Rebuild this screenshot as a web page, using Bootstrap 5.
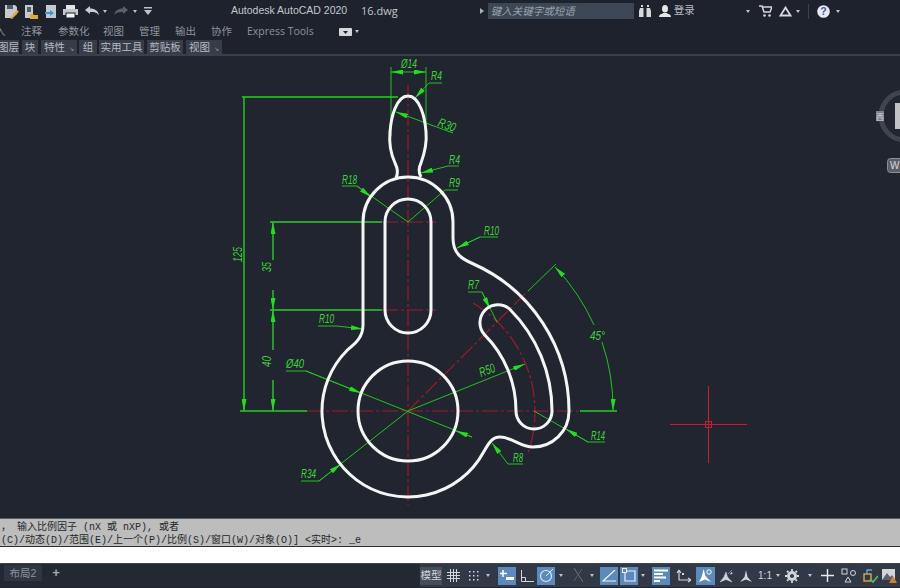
<!DOCTYPE html>
<html lang="zh-CN">
<head>
  <meta charset="UTF-8">
  <title>Autodesk AutoCAD 2020 16.dwg</title>
  <link href="https://cdn.jsdelivr.net/npm/bootstrap@5.3.3/dist/css/bootstrap.min.css" rel="stylesheet">
  <style>
    html, body { height: 100%; overflow: hidden; }
    body {
      background: #202530;
      color: #c6cbd2;
      font-family: "Liberation Sans", "Noto Sans CJK SC", sans-serif;
      font-size: 11px;
    }
    .cad-head { height: 56px; background: #1d222c; border-bottom: 2px solid #3a404b; flex: none; }
    .quick-row { height: 22px; flex: none; }
    .quick-row svg { display: block; flex: none; }
    .title-text { font-size: 10.5px; color: #c3c7cc; width: 116px; white-space: nowrap; }
    .file-text { font-family: "Open Sans", sans-serif; font-size: 11px; color: #c3c7cc; }
    .search-box { width: 146px; height: 16px; background: #3c4654; color: #9aa2ad; font-style: italic; font-size: 10.5px; line-height: 16px; padding-left: 3px; }
    .cad-caret { width: 0; height: 0; border-left: 2.5px solid transparent; border-right: 2.5px solid transparent; border-top: 3px solid #c0c4ca; flex: none; }
    .tab-row { height: 18px; flex: none; padding-top: 1px; color: #8d939c; font-size: 10.5px; }
    .tab-item { white-space: nowrap; }
    .panel-row { height: 14px; color: #b5bac1; font-size: 10.5px; line-height: 14px; }
    .panel-chip { background: #363c48; height: 14px; white-space: nowrap; text-align: center; flex: none; }
    .chip-arrow { font-family: "DejaVu Sans", sans-serif; font-size: 6px; color: #a0a5ad; margin-left: 4px; }
    .cad-view { height: 462px; flex: none; display: block; background: #202530; }
    .dim-text { font-family: "Liberation Sans", sans-serif; font-style: italic; font-size: 13px; fill: #3fd438; }
    .cmd-out { height: 29px; background: #bdbdbd; border-top: 1px solid #5a5f66; border-bottom: 1px solid #30343a; flex: none; color: #24272b;
      font-family: "Liberation Mono", "Noto Sans CJK SC", monospace; font-size: 10px; white-space: pre; overflow: hidden; padding: 2px 0 0 1px; }
    .cmd-line { height: 13px; line-height: 13px; overflow: hidden; }
    .cmd-in { height: 16px; background: #fff; flex: none; }
    .status-row { height: 24px; background: #232933; border-top: 1px solid #414752; flex: none; }
    .layout-tab { width: 38px; height: 16px; background: #2f3541; color: #8e949d; font-size: 10.5px; line-height: 16px; text-align: center; margin-top: 1px; }
    .add-tab { width: 20px; color: #a3a8b0; font-size: 13px; line-height: 15px; text-align: center; font-weight: bold; margin-top: 1px; }
    .status-tools { height: 23px; background: #323946; }
    .tool-btn { height: 18px; width: 18px; flex: none; display: flex; align-items: center; justify-content: center; color: #d2d5da; }
    .tool-btn.is-on { background: #5b8bbd; }
    .tool-label { width: 22px; background: #474e5b; font-size: 10.5px; }
    .tool-caret { width: 10px; flex: none; display: flex; align-items: center; justify-content: center; }
    .tool-gap { width: 3px; flex: none; }
  </style>
</head>
<body class="d-flex flex-column">

  <!-- 标题栏 + 功能区 -->
  <header class="cad-head d-flex flex-column">
    <div class="quick-row d-flex align-items-center">
      <svg class="ms-1" width="15" height="15" viewBox="0 0 15 15"><path d="M1 1h10l2 2v7l-5 4H1z" fill="#c5c8cc"/><rect x="3" y="1" width="6" height="4" fill="#555b66"/><path d="M6 14l7-8 2 1.500-7 7.500z" fill="#e0a83c"/></svg>
      <svg style="margin-left:5px" width="14" height="15" viewBox="0 0 14 15"><rect x="1" y="1" width="8" height="13" fill="#c5c8cc"/><rect x="3" y="3" width="4" height="5" fill="#555b66"/><path d="M6 10h3l1 1h4v4H6z" fill="#e0a83c"/></svg>
      <svg style="margin-left:7px" width="12" height="15" viewBox="0 0 12 15"><rect x="1" y="1" width="10" height="13" fill="#c5c8cc"/><path d="M0 8h5V6l4 3-4 3v-2H0z" fill="#2a9fd0"/></svg>
      <svg style="margin-left:6px" width="15" height="15" viewBox="0 0 15 15"><rect x="3" y="1" width="9" height="4" fill="#e4e6e8"/><rect x="0" y="5" width="15" height="6" fill="#c5c8cc"/><rect x="3" y="9" width="9" height="5" fill="#f2f3f4" stroke="#1d222c"/></svg>
      <svg style="margin-left:7px" width="14" height="10" viewBox="0 0 14 10"><path d="M0 4l5-4v2.500c5 0 8 2 9 7-2-3-4-3.500-9-3.500V8z" fill="#c9ccd0"/></svg>
      <div class="cad-caret ms-1"></div>
      <svg style="margin-left:7px" width="14" height="10" viewBox="0 0 14 10"><path d="M14 4L9 0v2.500c-5 0-8 2-9 7 2-3 4-3.500 9-3.500V8z" fill="#5a606a"/></svg>
      <div class="cad-caret" style="margin-left:5px"></div>
      <svg style="margin-left:7px" width="8" height="8" viewBox="0 0 8 8"><rect y="0" width="8" height="1.500" fill="#c0c4ca"/><path d="M0 3h8L4 8z" fill="#c0c4ca"/></svg>

      <div class="title-text" style="margin-left:79px">Autodesk AutoCAD 2020</div>
      <div class="file-text" style="margin-left:14px">16.dwg</div>

      <svg style="margin-left:82px" width="4" height="6" viewBox="0 0 4 6"><path d="M0 0l4 3-4 3z" fill="#aab0b8"/></svg>
      <div class="search-box" style="margin-left:4px">键入关键字或短语</div>
      <svg style="margin-left:5px" width="12" height="12" viewBox="0 0 12 12"><path d="M1 3h3.500v9H0V6zM7.500 3H11l1 3v6H7.500zM2 0h2v2H2zM8 0h2v2H8z" fill="#d6d8dc"/></svg>
      <svg style="margin-left:8px" width="12" height="12" viewBox="0 0 12 12"><ellipse cx="6" cy="3.800" rx="3" ry="3.800" fill="#e4e6e8"/><path d="M0 12c0-3 3-3 4.500-4h3c1.500 1 4.500 1 4.500 4z" fill="#e4e6e8"/></svg>
      <div style="margin-left:3px;font-size:10.5px;color:#b8bcc3">登录</div>
      <div class="cad-caret" style="margin-left:51px"></div>
      <svg style="margin-left:9px" width="13" height="12" viewBox="0 0 13 12"><path d="M0 1h3l2 6h6l2-5H4" fill="none" stroke="#d6d8dc" stroke-width="1.500"/><circle cx="5.500" cy="10.500" r="1.300" fill="#d6d8dc"/><circle cx="10.500" cy="10.500" r="1.300" fill="#d6d8dc"/></svg>
      <svg style="margin-left:7px" width="13" height="11" viewBox="0 0 13 11"><path d="M6.500 1.500L11.500 9.500H1.500z" fill="none" stroke="#d6d8dc" stroke-width="1.800"/></svg>
      <div class="cad-caret" style="margin-left:4px"></div>
      <div style="width:1px;height:15px;background:#3d434e;margin-left:8px"></div>
      <svg style="margin-left:8px" width="13" height="13" viewBox="0 0 13 13"><circle cx="6.500" cy="6.500" r="6.300" fill="#e8eaee"/><text x="6.500" y="10.300" text-anchor="middle" font-family="Liberation Sans" font-weight="700" font-size="10.500" fill="#3c55b0">?</text></svg>
      <div class="cad-caret" style="margin-left:6px"></div>
    </div>

    <div class="tab-row d-flex align-items-center">
      <div class="tab-item" style="width:21px;overflow:hidden;text-indent:-5px">入</div>
      <div class="tab-item" style="width:37px">注释</div>
      <div class="tab-item" style="width:45px">参数化</div>
      <div class="tab-item" style="width:36px">视图</div>
      <div class="tab-item" style="width:36px">管理</div>
      <div class="tab-item" style="width:36px">输出</div>
      <div class="tab-item" style="width:36px">协作</div>
      <div class="tab-item" style="width:92px;font-family:'Open Sans',sans-serif">Express Tools</div>
      <svg width="13" height="8" viewBox="0 0 13 8"><rect width="13" height="8" rx="1" fill="#d6d8dc"/><path d="M4 3h5L6.500 6z" fill="#1d222c"/></svg>
      <div class="cad-caret" style="margin-left:3px"></div>
    </div>

    <div class="panel-row d-flex">
      <div class="panel-chip" style="width:19px;direction:rtl">图层</div>
      <div class="panel-chip" style="width:16px;margin-left:3px">块</div>
      <div class="panel-chip" style="width:36px;margin-left:3px">特性<span class="chip-arrow">↘</span></div>
      <div class="panel-chip" style="width:18px;margin-left:2px">组</div>
      <div class="panel-chip" style="width:45px;margin-left:2px">实用工具</div>
      <div class="panel-chip" style="width:36px;margin-left:3px">剪贴板</div>
      <div class="panel-chip" style="width:36px;margin-left:3px">视图<span class="chip-arrow">↘</span></div>
    </div>
  </header>

  <!-- 模型空间，viewBox 与页面坐标一致 -->
  <svg class="cad-view" width="900" height="462" viewBox="0 56 900 462">
    <defs>
      <marker id="arrow" viewBox="0 0 12 5" refX="12" refY="2.500" markerWidth="12" markerHeight="5" markerUnits="userSpaceOnUse" orient="auto-start-reverse">
        <path d="M0 0L12 2.500 0 5z" fill="#1fe01a"/>
      </marker>
    </defs>

    <!-- 中心线 -->
    <g fill="none" stroke="#a3182b" stroke-width="1.200" stroke-dasharray="16 3 3 3">
      <path d="M408 85V505"/>
      <path d="M307 411H580"/>
      <path d="M382 222H436"/>
      <path d="M382 310H436"/>
      <path d="M408 411L528 291"/>
      <path d="M473 303A126 126 0 0 1 528 453"/>
    </g>

    <!-- 尺寸线 -->
    <g fill="none" stroke="#22c41f" stroke-width="1">
      <path d="M391 67V136M426 67V136"/>
      <path d="M408 72H391" marker-end="url(#arrow)"/>
      <path d="M408 72H426" marker-end="url(#arrow)"/>
      <path d="M442 83H429L415 98" marker-end="url(#arrow)"/>
      <path d="M453 133L396 112" marker-end="url(#arrow)"/>
      <path d="M459 166H448L421 173" marker-end="url(#arrow)"/>
      <path d="M342 186H357L408 222M408 222L445 190H458"/>
      <path d="M357 186L371 197" marker-end="url(#arrow)"/>
      <path d="M457 248L480 237H498"/>
      <path d="M480 237L457 248" marker-end="url(#arrow)"/>
      <path d="M318 326H337L363 329" marker-end="url(#arrow)"/>
      <path d="M286 371H306L472 437"/>
      <path d="M306 371L361 393" marker-end="url(#arrow)"/>
      <path d="M472 437L456 431" marker-end="url(#arrow)"/>
      <path d="M301 481H319L408 411"/>
      <path d="M319 481L341 464" marker-end="url(#arrow)"/>
      <path d="M408 411L525 364" marker-end="url(#arrow)"/>
      <path d="M468 292H482L497 322"/>
      <path d="M482 292L490 309" marker-end="url(#arrow)"/>
      <path d="M523 464H508L492 443" marker-end="url(#arrow)"/>
      <path d="M534 411L588 442H605"/>
      <path d="M588 442L566 429" marker-end="url(#arrow)"/>
      <path d="M528 291L556 264"/>
      <path d="M594 325A205 205 0 0 0 555 267" marker-end="url(#arrow)"/>
      <path d="M602 342A205 205 0 0 1 613 411" marker-end="url(#arrow)"/>
    </g>
    <g fill="none" stroke="#26d022" stroke-width="1.400">
      <path d="M242 97H398"/>
      <path d="M270 222H382"/>
      <path d="M270 310H382"/>
      <path d="M240 411H307"/>
      <path d="M580 411H617"/>
      <path d="M244 97V411" marker-end="url(#arrow)"/>
      <path d="M273 260V222" marker-end="url(#arrow)"/>
      <path d="M273 290V310" marker-end="url(#arrow)"/>
      <path d="M273 350V310" marker-end="url(#arrow)"/>
      <path d="M273 380V411" marker-end="url(#arrow)"/>
    </g>

    <!-- 轮廓 -->
    <g fill="none" stroke="#f4f5f5" stroke-width="3">
      <circle cx="408" cy="411" r="50"/>
      <path d="M385 222A23 23 0 0 1 431 222V310A23 23 0 0 1 385 310Z"/>
      <path d="M509.800 309.200A144 144 0 0 1 552 411A18 18 0 0 1 516 411A108 108 0 0 0 484.400 334.600A18 18 0 0 1 509.800 309.200Z"/>
      <path d="M363 222A45 45 0 0 1 453 222V238C453 254 462 259 473.500 264A161 161 0 0 1 569 411C569 432 552 447 533 447C520 447 512 437 500 437C491 437 488 445 483.460 452.250A86 86 0 1 1 347.190 350.190C356 343 363 337 363 325Z"/>
      <path d="M396 178C399 172 397 167 395 163C390 152 389 142 390 132C391 118 396 96 408 96C420 96 425 118 426 132C427 142 425 152 421 163C419 167 418 172 421 177"/>
    </g>

    <!-- 标注文字 -->
    <g class="dim-text">
      <text x="401" y="68" textLength="16" lengthAdjust="spacingAndGlyphs">Ø14</text>
      <text x="431" y="80" textLength="11" lengthAdjust="spacingAndGlyphs">R4</text>
      <text x="437" y="126" textLength="18" lengthAdjust="spacingAndGlyphs" transform="rotate(20 437 126)">R30</text>
      <text x="449" y="164" textLength="11" lengthAdjust="spacingAndGlyphs">R4</text>
      <text x="342" y="184" textLength="15" lengthAdjust="spacingAndGlyphs">R18</text>
      <text x="449" y="187" textLength="11" lengthAdjust="spacingAndGlyphs">R9</text>
      <text x="484" y="235" textLength="15" lengthAdjust="spacingAndGlyphs">R10</text>
      <text x="319" y="323" textLength="15" lengthAdjust="spacingAndGlyphs">R10</text>
      <text x="286" y="368" textLength="18" lengthAdjust="spacingAndGlyphs">Ø40</text>
      <text x="301" y="478" textLength="15" lengthAdjust="spacingAndGlyphs">R34</text>
      <text x="481" y="377" textLength="16" lengthAdjust="spacingAndGlyphs" transform="rotate(-20 481 377)">R50</text>
      <text x="468" y="289" textLength="11" lengthAdjust="spacingAndGlyphs">R7</text>
      <text x="513" y="462" textLength="10" lengthAdjust="spacingAndGlyphs">R8</text>
      <text x="591" y="440" textLength="14" lengthAdjust="spacingAndGlyphs">R14</text>
      <text x="590" y="340" textLength="15" lengthAdjust="spacingAndGlyphs">45°</text>
      <text x="242" y="262" textLength="15" lengthAdjust="spacingAndGlyphs" transform="rotate(-90 242 262)">125</text>
      <text x="271" y="272" textLength="10" lengthAdjust="spacingAndGlyphs" transform="rotate(-90 271 272)">35</text>
      <text x="271" y="367" textLength="11" lengthAdjust="spacingAndGlyphs" transform="rotate(-90 271 367)">40</text>
    </g>

    <!-- 十字光标 -->
    <g fill="none" stroke="#c2202f" stroke-width="1">
      <path d="M670 424.500H747M708.500 386V463"/>
      <rect x="705.500" y="421.500" width="6" height="6"/>
    </g>

    <!-- ViewCube -->
    <circle cx="905" cy="116" r="24" fill="none" stroke="#3f444e" stroke-width="5"/>
    <rect x="895" y="103" width="8" height="26" fill="#c0c2c6"/>
    <rect x="876" y="111" width="8" height="10" fill="#7c818a"/>
    <text x="880" y="119.500" text-anchor="middle" font-size="8" fill="#d0d2d6" font-family="Noto Sans CJK SC">西</text>
    <rect x="887.500" y="158.500" width="20" height="14" rx="3" fill="#5a5f68" stroke="#8a8e95"/>
    <text x="890" y="169" font-size="10" fill="#d6d8db" font-family="Liberation Sans">W</text>
  </svg>

  <!-- 命令行 -->
  <div class="cmd-out"><div class="cmd-line">， 输入比例因子 (nX 或 nXP), 或者</div><div class="cmd-line">(C)/动态(D)/范围(E)/上一个(P)/比例(S)/窗口(W)/对象(O)] &lt;实时&gt;: _e</div></div>
  <div class="cmd-in"></div>

  <!-- 状态栏 -->
  <footer class="status-row d-flex align-items-start">
    <div class="layout-tab ms-1">布局2</div>
    <div class="add-tab ms-1">+</div>
    <div class="status-tools d-flex align-items-center ms-auto" style="width:480px">
      <div class="tool-btn tool-label">模型</div><div class="tool-gap"></div>
      <div class="tool-btn" style="width:17px"><svg width="13" height="13" viewBox="0 0 13 13"><path d="M3.500 0V13M6.500 0V13M9.500 0V13M0 3.500H13M0 6.500H13M0 9.500H13" stroke="#d2d5da"/></svg></div><div class="tool-gap"></div>
      <div class="tool-btn"><svg width="12" height="12" viewBox="0 0 12 12"><g fill="#d2d5da"><rect x="1" y="1" width="1.500" height="1.500"/><rect x="5" y="1" width="1.500" height="1.500"/><rect x="9" y="1" width="1.500" height="1.500"/><rect x="1" y="5" width="1.500" height="1.500"/><rect x="5" y="5" width="1.500" height="1.500"/><rect x="9" y="5" width="1.500" height="1.500"/><rect x="1" y="9" width="1.500" height="1.500"/><rect x="5" y="9" width="1.500" height="1.500"/><rect x="9" y="9" width="1.500" height="1.500"/></g></svg></div>
      <div class="tool-caret"><div class="cad-caret"></div></div><div style="width:5px"></div>
      <div class="tool-btn is-on"><svg width="16" height="14" viewBox="0 0 16 14"><path d="M4 1V8M1 4.500H8" stroke="#fff" stroke-width="1.500"/><rect x="7" y="8" width="8" height="3" fill="#fff"/></svg></div><div style="width:2px"></div>
      <div class="tool-btn"><svg width="15" height="14" viewBox="0 0 15 14"><path d="M1.500 1V12.500H14M1.500 8.500H5.500V12.500" fill="none" stroke="#d2d5da"/></svg></div><div style="width:1px"></div>
      <div class="tool-btn is-on"><svg width="15" height="15" viewBox="0 0 15 15"><circle cx="7" cy="8" r="5.500" fill="none" stroke="#dfe6ee" stroke-width="1.200"/><path d="M7 8L14 1" stroke="#dfe6ee"/></svg></div>
      <div class="tool-caret" style="width:12px"><div class="cad-caret"></div></div><div style="width:1px"></div>
      <div class="tool-btn" style="width:19px"><svg width="14" height="15" viewBox="0 0 14 15"><path d="M3 0L12 14" stroke="#8a6d58"/><path d="M11 1L3 13" stroke="#5d636e"/></svg></div>
      <div class="tool-caret"><div class="cad-caret"></div></div><div class="tool-gap"></div>
      <div class="tool-btn is-on"><svg width="14" height="12" viewBox="0 0 14 12"><path d="M13 0L1 11H14" fill="none" stroke="#eef2f6" stroke-width="1.200"/></svg></div><div style="width:2px"></div>
      <div class="tool-btn is-on"><svg width="15" height="15" viewBox="0 0 15 15"><path d="M3 3H13V13H3Z" fill="none" stroke="#eef2f6" stroke-width="1.200"/><rect x="0.500" y="0.500" width="4" height="4" fill="#5b8bbd" stroke="#eef2f6"/></svg></div>
      <div class="tool-caret"><div class="cad-caret"></div></div><div style="width:4px"></div>
      <div class="tool-btn is-on"><svg width="15" height="13" viewBox="0 0 15 13"><path d="M0 1.500H14M0 5H9M0 8.500H12M0 12H6" stroke="#fff" stroke-width="2"/></svg></div><div style="width:4px"></div>
      <div class="tool-btn" style="width:19px"><svg width="15" height="15" viewBox="0 0 15 15"><path d="M3 2V12H15M3 2L1 5M3 2L5 5M12 10L15 12 12 14" fill="none" stroke="#d2d5da" stroke-width="1.200"/><rect x="6" y="5" width="2" height="2" fill="#d2d5da"/></svg></div><div class="tool-gap"></div>
      <div class="tool-btn is-on" style="width:19px"><svg width="15" height="15" viewBox="0 0 15 15"><path d="M5.500 1L7.500 8 13 14 7 11.500 1 14 4 8z" fill="#fff"/><circle cx="11" cy="4" r="2.200" fill="none" stroke="#fff"/></svg></div><div style="width:2px"></div>
      <div class="tool-btn"><svg width="14" height="14" viewBox="0 0 14 14"><path d="M7 3L8.500 8 13 13 7 10.500 1 13 5 8zM9 5L13 1M11 5H13V3" fill="#d2d5da" stroke="#d2d5da" stroke-width=".5"/></svg></div><div style="width:2px"></div>
      <div class="tool-btn"><svg width="14" height="14" viewBox="0 0 14 14"><path d="M7 1L8.500 8 13 13 7 10.500 1 13 5.500 8z" fill="#d2d5da"/></svg></div><div style="width:2px"></div>
      <div class="tool-btn" style="width:16px;font-size:10px">1:1</div>
      <div class="tool-caret"><div class="cad-caret"></div></div>
      <div class="tool-btn"><svg width="14" height="14" viewBox="0 0 14 14"><circle cx="7" cy="7" r="3.500" fill="none" stroke="#d2d5da" stroke-width="3"/><path d="M7 0V14M0 7H14M2 2L12 12M12 2L2 12" stroke="#d2d5da" stroke-width="1.800" stroke-dasharray="2 10"/></svg></div><div style="width:4px"></div>
      <div class="tool-caret"><div class="cad-caret"></div></div><div class="tool-gap"></div>
      <div class="tool-btn" style="width:19px"><svg width="15" height="15" viewBox="0 0 15 15"><path d="M7.500 1V14M1 7.500H14" stroke="#e8eaee" stroke-width="1.400"/></svg></div><div style="width:2px"></div>
      <div class="tool-btn"><svg width="15" height="15" viewBox="0 0 15 15"><g fill="none" stroke="#d2d5da"><rect x="1" y="1" width="5" height="5"/><circle cx="12" cy="5" r="2.500"/><path d="M7 9L10 14H4z"/></g></svg></div><div style="width:4px"></div>
      <div class="tool-btn"><svg width="15" height="15" viewBox="0 0 15 15"><rect x="1" y="6" width="7" height="7" fill="none" stroke="#e0a83c" stroke-width="1.400"/><path d="M4 6V2H9" fill="none" stroke="#5fa8dd" stroke-width="1.400"/><path d="M7 11L10 14 15 8" fill="none" stroke="#4fc46a" stroke-width="1.600"/></svg></div><div style="width:2px"></div>
      <div class="tool-btn" style="width:16px"><svg width="15" height="15" viewBox="0 0 15 15"><rect x="0" y="1" width="13" height="11" fill="#d2d5da"/><path d="M0 12L5 5 8 9 10 7 13 12z" fill="#5d636e"/><path d="M11 8L15 15H7z" fill="#e07a2a"/></svg></div>
    </div>
  </footer>

  <script src="https://cdn.jsdelivr.net/npm/bootstrap@5.3.3/dist/js/bootstrap.bundle.min.js"></script>
</body>
</html>
